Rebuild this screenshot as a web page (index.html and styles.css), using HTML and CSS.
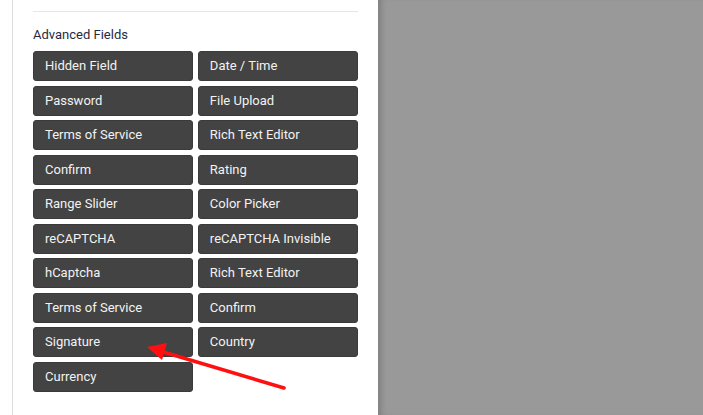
FILE: index.html
```html
<!DOCTYPE html>
<html>
<head>
<meta charset="utf-8">
<link rel="stylesheet" href="styles.css">
</head>
<body>
<div class="page">
  <div class="gutter"></div>
  <div class="panel">
    <div class="sep"></div>
    <div class="title">Advanced Fields</div>
    <div class="grid">
      <div class="btn">Hidden Field</div>
      <div class="btn">Date / Time</div>
      <div class="btn">Password</div>
      <div class="btn">File Upload</div>
      <div class="btn">Terms of Service</div>
      <div class="btn">Rich Text Editor</div>
      <div class="btn">Confirm</div>
      <div class="btn">Rating</div>
      <div class="btn">Range Slider</div>
      <div class="btn">Color Picker</div>
      <div class="btn">reCAPTCHA</div>
      <div class="btn">reCAPTCHA Invisible</div>
      <div class="btn">hCaptcha</div>
      <div class="btn">Rich Text Editor</div>
      <div class="btn">Terms of Service</div>
      <div class="btn">Confirm</div>
      <div class="btn">Signature</div>
      <div class="btn">Country</div>
      <div class="btn">Currency</div>
    </div>
  </div>
  <div class="backdrop"></div>
  <svg class="arrow" width="703" height="415" viewBox="0 0 703 415">
    <line x1="284" y1="388" x2="160" y2="351" stroke="#ff1010" stroke-width="3.6" stroke-linecap="round"/>
    <polygon points="147,347 167,343 162,360" fill="#ff1010"/>
  </svg>
</div>
</body>
</html>
```
FILE: styles.css
```css
html, body {
  margin: 0;
  padding: 0;
  background: #ffffff;
}
.page {
  position: relative;
  display: flex;
  width: 703px;
  height: 415px;
  overflow: hidden;
  font-family: Roboto, "Liberation Sans", sans-serif;
}
.gutter {
  width: 12px;
  border-right: 1px solid #dcdcdc;
  flex: none;
}
.panel {
  width: 325px;
  padding: 0 20px 0 20px;
  flex: none;
}
.sep {
  margin-top: 11px;
  height: 1px;
  background: #e6e6e6;
}
.title {
  margin-top: 15px;
  font-size: 13px;
  line-height: 16px;
  color: #1f2b45;
}
.grid {
  margin-top: 8px;
  display: grid;
  grid-template-columns: 1fr 1fr;
  column-gap: 4.7px;
  row-gap: 4.55px;
}
.btn {
  height: 30px;
  box-sizing: border-box;
  background: #434343;
  border: 1px solid #3a3a3a;
  border-radius: 3px;
  color: #f2f2f2;
  font-size: 13px;
  line-height: 28px;
  padding-left: 11px;
  white-space: nowrap;
}
.backdrop {
  flex: 1;
  background: #999999;
  box-shadow: inset 7px 0 6px -4px rgba(0,0,0,0.18);
}
.arrow {
  position: absolute;
  left: 0;
  top: 0;
  pointer-events: none;
}
```
